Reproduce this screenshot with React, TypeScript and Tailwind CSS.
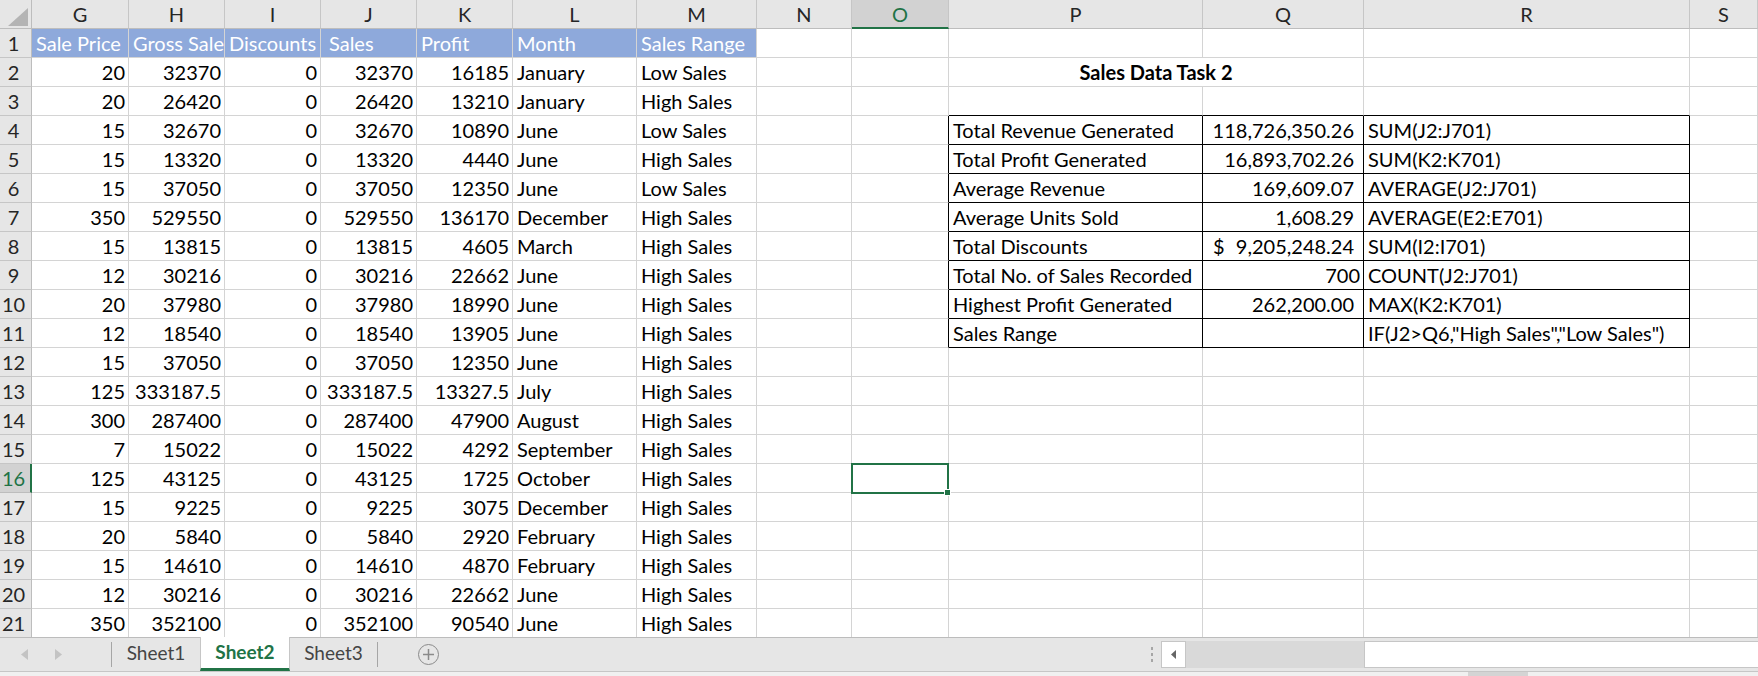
import React from "react";

const LETTERS = ["G", "H", "I", "J", "K", "L", "M", "N", "O", "P", "Q", "R", "S"];

const HEAD = ["Sale Price", "Gross Sale", "Discounts", "Sales", "Profit", "Month", "Sales Range"];

const ROWS: string[][] = [
  ["20", "32370", "0", "32370", "16185", "January", "Low Sales"],
  ["20", "26420", "0", "26420", "13210", "January", "High Sales"],
  ["15", "32670", "0", "32670", "10890", "June", "Low Sales"],
  ["15", "13320", "0", "13320", "4440", "June", "High Sales"],
  ["15", "37050", "0", "37050", "12350", "June", "Low Sales"],
  ["350", "529550", "0", "529550", "136170", "December", "High Sales"],
  ["15", "13815", "0", "13815", "4605", "March", "High Sales"],
  ["12", "30216", "0", "30216", "22662", "June", "High Sales"],
  ["20", "37980", "0", "37980", "18990", "June", "High Sales"],
  ["12", "18540", "0", "18540", "13905", "June", "High Sales"],
  ["15", "37050", "0", "37050", "12350", "June", "High Sales"],
  ["125", "333187.5", "0", "333187.5", "13327.5", "July", "High Sales"],
  ["300", "287400", "0", "287400", "47900", "August", "High Sales"],
  ["7", "15022", "0", "15022", "4292", "September", "High Sales"],
  ["125", "43125", "0", "43125", "1725", "October", "High Sales"],
  ["15", "9225", "0", "9225", "3075", "December", "High Sales"],
  ["20", "5840", "0", "5840", "2920", "February", "High Sales"],
  ["15", "14610", "0", "14610", "4870", "February", "High Sales"],
  ["12", "30216", "0", "30216", "22662", "June", "High Sales"],
  ["350", "352100", "0", "352100", "90540", "June", "High Sales"],
];

// summary table on P4:R11
const SUMMARY: Record<number, [string, string, string]> = {
  4: ["Total Revenue Generated", "118,726,350.26", "SUM(J2:J701)"],
  5: ["Total Profit Generated", "16,893,702.26", "SUM(K2:K701)"],
  6: ["Average Revenue", "169,609.07", "AVERAGE(J2:J701)"],
  7: ["Average Units Sold", "1,608.29", "AVERAGE(E2:E701)"],
  8: ["Total Discounts", "9,205,248.24", "SUM(I2:I701)"],
  9: ["Total No. of Sales Recorded", "700", "COUNT(J2:J701)"],
  10: ["Highest Profit Generated", "262,200.00", "MAX(K2:K701)"],
  11: ["Sales Range", "", 'IF(J2>Q6,"High Sales","Low Sales")'],
};

const base = "flex h-[29px] items-end whitespace-nowrap border-b border-r border-[#d4d4d4] pb-[2px] leading-[24px]";
const cell = `${base} overflow-hidden`;

function Corner() {
  return (
    <div className="relative h-[29px] border-b border-r border-[#bdbdbd] bg-[#e6e6e6]">
      <svg className="absolute left-[8px] top-[8px]" width="20" height="18" viewBox="0 0 20 18">
        <polygon points="20,0 20,18 0,18" fill="#b4b4b4" />
      </svg>
    </div>
  );
}

function ColHead({ l }: { l: string }) {
  if (l === "O") {
    return (
      <div className="flex h-[29px] items-center justify-center border-b-2 border-r border-b-[#217346] border-r-[#c6c6c6] bg-[#d2d2d2] pt-[1px] text-[#217346]">
        {l}
      </div>
    );
  }
  return (
    <div className="flex h-[29px] items-center justify-center border-b border-r border-b-[#bdbdbd] border-r-[#c6c6c6] bg-[#e6e6e6] text-[#262626]">
      {l}
    </div>
  );
}

function RowHead({ n }: { n: number }) {
  if (n === 16) {
    return (
      <div className="flex h-[29px] items-center justify-center border-b border-r-2 border-b-[#bdbdbd] border-r-[#217346] bg-[#d2d2d2] pr-[3px] text-[#217346]">
        {n}
      </div>
    );
  }
  return (
    <div className="flex h-[29px] items-center justify-center border-b border-r border-b-[#c6c6c6] border-r-[#bdbdbd] bg-[#e6e6e6] pr-[4px] text-[#262626]">
      {n}
    </div>
  );
}

function Row({ n }: { n: number }) {
  const out: React.ReactNode[] = [<RowHead key="h" n={n} />];

  // G..M
  if (n === 1) {
    HEAD.forEach((h, i) =>
      out.push(
        <div key={"g" + i} className={`${cell} border-[#8ea9db] bg-[#8ea9db] text-white ${i === 3 ? "pl-[8px]" : "pl-[4px]"}`}>
          {h}
        </div>
      )
    );
  } else {
    const r = ROWS[n - 2];
    r.forEach((v, i) =>
      out.push(
        <div key={"g" + i} className={`${cell} ${i < 5 ? "justify-end pr-[3px]" : "pl-[4px]"}`}>
          {v}
        </div>
      )
    );
  }

  // N
  out.push(<div key="n" className={cell} />);

  // O (selected at row 16, table's left edge rows 4-11)
  const inTable = n >= 4 && n <= 11;
  if (n === 16) {
    out.push(
      <div key="o" className={`${base} relative z-10`}>
        <div className="absolute -left-[1px] -top-[1px] h-[31px] w-[98px] border-2 border-[#217346]">
          <div className="absolute -bottom-[4px] -right-[4px] h-[7px] w-[7px] border border-white bg-[#217346]" />
        </div>
      </div>
    );
  } else {
    out.push(<div key="o" className={`${cell} ${inTable ? "border-r-black" : ""}`} />);
  }

  // P..R
  if (n === 2) {
    out.push(
      <div key="pq" className={`${cell} col-span-2 justify-center font-bold`}>
        Sales Data Task 2
      </div>
    );
    out.push(<div key="r" className={cell} />);
  } else if (inTable) {
    const [a, b, c] = SUMMARY[n];
    const tb = "border-b-black border-r-black";
    out.push(
      <div key="p" className={`${cell} ${tb} pl-[4px]`}>
        {a}
      </div>
    );
    out.push(
      n === 8 ? (
        <div key="q" className={`${cell} ${tb} justify-between pl-[10px] pr-[9px]`}>
          <span>$</span>
          <span>{b}</span>
        </div>
      ) : (
        <div key="q" className={`${cell} ${tb} justify-end ${n === 9 ? "pr-[3px]" : "pr-[9px]"}`}>
          {b}
        </div>
      )
    );
    out.push(
      <div key="r" className={`${cell} ${tb} pl-[4px]`}>
        {c}
      </div>
    );
  } else {
    const top = n === 3 ? "border-b-black" : "";
    out.push(<div key="p" className={`${cell} ${top}`} />);
    out.push(<div key="q" className={`${cell} ${top}`} />);
    out.push(<div key="r" className={`${cell} ${top}`} />);
  }

  // S
  out.push(<div key="s" className={cell} />);
  return <>{out}</>;
}

function TabBar() {
  return (
    <div className="flex h-[34px] items-stretch border-t border-[#bcbcbc] bg-[#e6e6e6] text-[19px]">
      <div className="flex w-[111px] items-center">
        <svg className="ml-[21px]" width="7" height="11" viewBox="0 0 7 11">
          <polygon points="7,0 7,11 0,5.5" fill="#c3c3c3" />
        </svg>
        <svg className="ml-[27px]" width="7" height="11" viewBox="0 0 7 11">
          <polygon points="0,0 0,11 7,5.5" fill="#c3c3c3" />
        </svg>
      </div>
      <div className="my-[4px] w-px bg-[#a6a6a6]" />
      <div className="flex w-[88px] items-center justify-center pb-[2px] text-[#444]">Sheet1</div>
      <div className="-mt-px flex w-[90px] items-center justify-center border-x border-[#c6c6c6] border-b-[3px] border-b-[#217346] bg-white pb-[1px] font-bold text-[#217346]">
        Sheet2
      </div>
      <div className="flex w-[87px] items-center justify-center pb-[2px] text-[#444]">Sheet3</div>
      <div className="my-[4px] w-px bg-[#a6a6a6]" />
      <div className="flex w-[100px] items-center justify-center">
        <div className="flex h-[21px] w-[21px] items-center justify-center rounded-full border-[1.5px] border-[#8a8a8a]">
          <svg width="11" height="11" viewBox="0 0 11 11">
            <path d="M5.5 0v11M0 5.5h11" stroke="#8a8a8a" strokeWidth="1.5" />
          </svg>
        </div>
      </div>
      <div className="flex-1" />
      <div className="flex w-[18px] flex-col items-center justify-center gap-[3px]">
        <div className="h-[3px] w-[2px] bg-[#a6a6a6]" />
        <div className="h-[3px] w-[2px] bg-[#a6a6a6]" />
        <div className="h-[3px] w-[2px] bg-[#a6a6a6]" />
      </div>
      <div className="my-[3px] flex w-[25px] items-center justify-center border border-[#c6c6c6] bg-white">
        <svg width="5" height="9" viewBox="0 0 5 9">
          <polygon points="5,0 5,9 0,4.5" fill="#666" />
        </svg>
      </div>
      <div className="my-[3px] w-[178px] bg-[#d9d9d9]" />
      <div className="my-[3px] w-[394px] border border-r-0 border-[#c6c6c6] bg-white" />
    </div>
  );
}

export default function App() {
  const nums = Array.from({ length: 21 }, (_, i) => i + 1);
  return (
    <div className="flex h-[676px] w-[1758px] flex-col overflow-hidden bg-white font-['Lato',sans-serif] text-[20px] text-black">
      <div className="flex-1 overflow-hidden">
        <div className="grid grid-cols-[32px_97px_96px_96px_96px_96px_124px_120px_95px_97px_254px_161px_326px_68px]">
          <Corner />
          {LETTERS.map((l) => (
            <ColHead key={l} l={l} />
          ))}
          {nums.map((n) => (
            <Row key={n} n={n} />
          ))}
        </div>
      </div>
      <TabBar />
      <div className="flex h-[5px] border-t border-[#c6c6c6] bg-[#f0f0f0]">
        <div className="ml-[1468px] w-[60px] bg-[#d4d4d4]" />
      </div>
    </div>
  );
}
